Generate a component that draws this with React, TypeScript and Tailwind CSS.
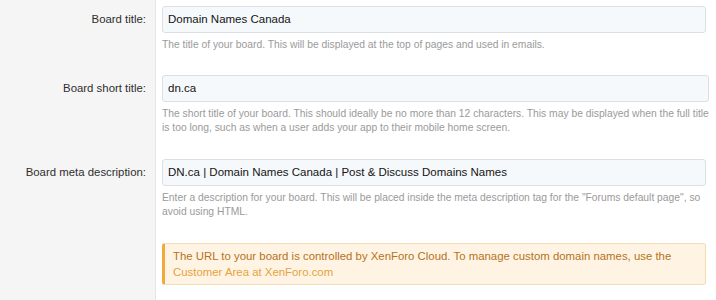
import React from "react";

const font = { fontFamily: '"Liberation Sans", Arial, sans-serif' };

function Row({
  label,
  value,
  help,
  pb,
}: {
  label: string;
  value: string;
  help: React.ReactNode;
  pb: string;
}) {
  return (
    <div className="flex">
      <div className="w-[156px] shrink-0 bg-[#f5f5f5] border-r border-[#e6e6e6] pt-[6px] pr-[9px]">
        <div className="h-[27px] flex items-center justify-end text-[11.4px] text-[#2e2e2e]">
          {label}
        </div>
      </div>
      <div className={`flex-1 pl-[6px] pr-[10px] pt-[6px] ${pb}`}>
        <div className="h-[27px] rounded-[3px] border border-[#dcdfe3] bg-[#f6f9fc] flex items-center px-[5px] text-[11.5px] text-[#141414]">
          {value}
        </div>
        <div className="mt-[5px] text-[10.3px] leading-[14px] text-[#9a9a9a] whitespace-nowrap">{help}</div>
      </div>
    </div>
  );
}

export default function App() {
  return (
    <div className="w-[716px] h-[300px] bg-white overflow-hidden flex flex-col" style={font}>
      <Row
        label="Board title:"
        value="Domain Names Canada"
        help="The title of your board. This will be displayed at the top of pages and used in emails."
        pb="pb-[17px]"
      />
      <Row
        label="Board short title:"
        value="dn.ca"
        help={
          <>
            The short title of your board. This should ideally be no more than 12 characters. This may be displayed when the full title
            <br />
            is too long, such as when a user adds your app to their mobile home screen.
          </>
        }
        pb="pb-[18px]"
      />
      <Row
        label="Board meta description:"
        value="DN.ca | Domain Names Canada | Post & Discuss Domains Names"
        help={
          <>
            Enter a description for your board. This will be placed inside the meta description tag for the "Forums default page", so
            <br />
            avoid using HTML.
          </>
        }
        pb="pb-[18px]"
      />
      <div className="flex flex-1">
        <div className="w-[156px] shrink-0 bg-[#f5f5f5] border-r border-[#e6e6e6]" />
        <div className="flex-1 pl-[6px] pr-[10px] pt-[6px]">
          <div className="rounded-[3px] border border-[#f4dcb6] border-l-[3px] border-l-[#f2a93b] bg-[#fff4e4] pl-[8px] pr-[8px] py-[4px] text-[11.4px] leading-[16px]">
            <div className="text-[#b5721b]">
              The URL to your board is controlled by XenForo Cloud. To manage custom domain names, use the
            </div>
            <div className="text-[#e5a33d]">Customer Area at XenForo.com</div>
          </div>
        </div>
      </div>
    </div>
  );
}
